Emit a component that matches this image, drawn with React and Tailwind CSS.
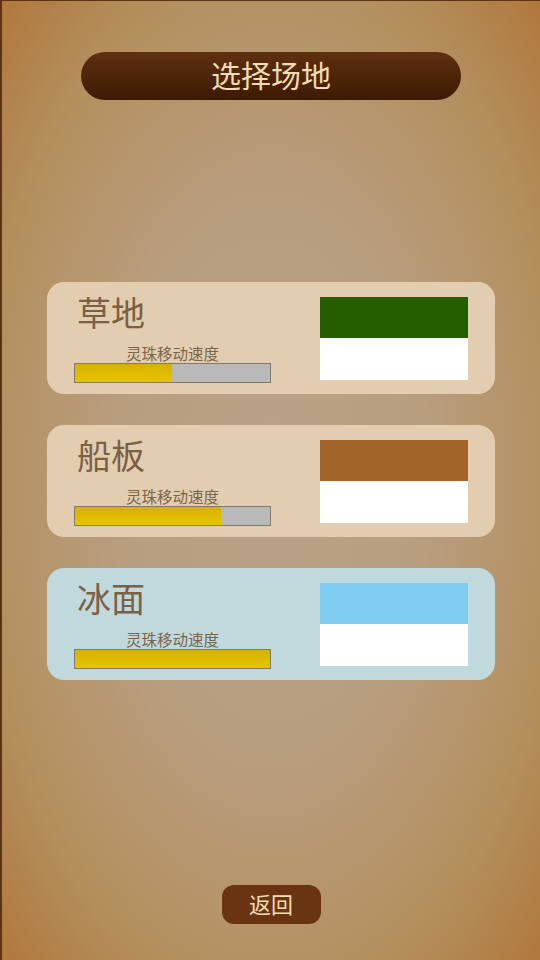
import React from "react";

const cards = [
  { name: "草地", pct: 49.5, bg: "bg-[#e3cdb0]", swatch: "bg-[#245e00]" },
  { name: "船板", pct: 75, bg: "bg-[#e3cdb0]", swatch: "bg-[#a26428]" },
  { name: "冰面", pct: 100, bg: "bg-[#c0d9dc]", swatch: "bg-[#80cbf0]" },
];

function Card({ name, pct, bg, swatch }) {
  return (
    <div className={`${bg} w-[448px] h-[112px] rounded-[17px] flex justify-between pl-[27px] pr-[27px]`}>
      <div className="flex flex-col w-[197px] pt-[13px]">
        <div className="text-[34px] leading-[34px] h-[34px] text-[#7a6045] pl-[3px]">{name}</div>
        <div className="mt-[15px] text-[15.5px] leading-[18px] text-[#7a6548] text-center">灵珠移动速度</div>
        <div className="mt-[1px] h-[20px] w-[197px] border border-[#807a6e] bg-[#b9b9b9] flex">
          <div
            className="h-full bg-gradient-to-b from-[#d6b100] to-[#e6c400]"
            style={{ width: `${pct}%` }}
          />
        </div>
      </div>
      <div className="flex flex-col w-[148px] h-[83px] mt-[15px]">
        <div className={`${swatch} h-[41px]`} />
        <div className="bg-white h-[42px]" />
      </div>
    </div>
  );
}

export default function App() {
  return (
    <div
      className="w-[540px] h-[960px] overflow-hidden flex flex-col items-center border-l-2 border-t border-[#5a3414] bg-[radial-gradient(ellipse_at_center,#baa186_0%,#b89e80_40%,#b4905f_75%,#b0783c_100%)]"
      style={{ fontFamily: '"Noto Sans CJK SC", "Noto Sans", sans-serif' }}
    >
      <div className="mt-[51px] w-[380px] h-[48px] rounded-full bg-gradient-to-b from-[#5e3110] to-[#3e1a05] flex items-center justify-center pb-[5px]">
        <span className="text-[30px] leading-none text-[#f2dcb5]">选择场地</span>
      </div>
      <div className="mt-[182px] flex flex-col gap-[31px]">
        {cards.map((c) => (
          <Card key={c.name} {...c} />
        ))}
      </div>
      <div className="mt-[205px] w-[99px] h-[39px] rounded-[12px] bg-[#6a3412] flex items-center justify-center pb-[3px]">
        <span className="text-[22px] leading-none text-[#f2dcb5]">返回</span>
      </div>
    </div>
  );
}
